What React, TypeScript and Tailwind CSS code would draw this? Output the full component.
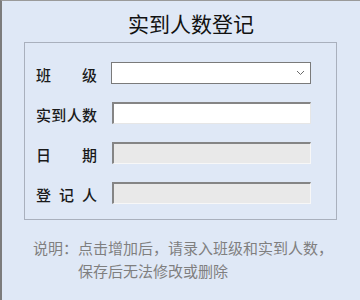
import React from "react";

const font = { fontFamily: '"Noto Sans CJK SC", "Noto Sans", sans-serif' };

function Spread({ chars }: { chars: string[] }) {
  return (
    <div className="flex w-[61px] justify-between pt-[2px] text-[15px] leading-none font-medium text-[#1a1a1a]">
      {chars.map((c, i) => (
        <span key={i}>{c}</span>
      ))}
    </div>
  );
}

export default function App() {
  return (
    <div
      className="w-[360px] h-[300px] overflow-hidden border-t border-l-2 border-t-[#9a9a9a] border-l-[#7c7c7c] bg-[#dfe8f6]"
      style={font}
    >
      <div className="pt-[9px] pl-[126px] h-[35px] text-[21px] leading-[26px] text-[#111]">
        实到人数登记
      </div>
      <div className="ml-[22px] mt-[6px] w-[313px] h-[178px] border border-[#a9b0bd] pt-[19px] pl-[11px] flex flex-col gap-[18px]">
        <div className="flex items-center h-[22px]">
          <Spread chars={["班", "级"]} />
          <div className="ml-[14px] w-[200px] h-[22px] bg-white border border-[#7a7a7a] flex items-center justify-end pr-[5px]">
            <svg width="9" height="6" viewBox="0 0 9 6" fill="none">
              <path d="M1 1 L4.5 4.5 L8 1" stroke="#6a6a6a" strokeWidth="1" />
            </svg>
          </div>
        </div>
        <div className="flex items-center h-[22px]">
          <Spread chars={["实", "到", "人", "数"]} />
          <input
            className="ml-[15px] w-[199px] h-[22px] bg-white border-t-2 border-l-2 border-r border-b border-t-[#858585] border-l-[#858585] border-r-[#e6e6e6] border-b-[#e6e6e6] outline-none"
          />
        </div>
        <div className="flex items-center h-[22px]">
          <Spread chars={["日", "期"]} />
          <input
            disabled
            className="ml-[15px] w-[199px] h-[22px] bg-[#e9e9e9] border-t-2 border-l-2 border-r border-b border-t-[#858585] border-l-[#858585] border-r-[#f7f7f7] border-b-[#f7f7f7]"
          />
        </div>
        <div className="flex items-center h-[22px]">
          <Spread chars={["登", "记", "人"]} />
          <input
            disabled
            className="ml-[15px] w-[199px] h-[22px] bg-[#e9e9e9] border-t-2 border-l-2 border-r border-b border-t-[#858585] border-l-[#858585] border-r-[#f7f7f7] border-b-[#f7f7f7]"
          />
        </div>
      </div>
      <div className="ml-[31px] mt-[16px] flex text-[15px] leading-[23px] text-[#7f7f7f]">
        <span className="shrink-0">说明：</span>
        <div className="flex flex-col">
          <span className="whitespace-nowrap">点击增加后，请录入班级和实到人数，</span>
          <span className="whitespace-nowrap">保存后无法修改或删除</span>
        </div>
      </div>
    </div>
  );
}
